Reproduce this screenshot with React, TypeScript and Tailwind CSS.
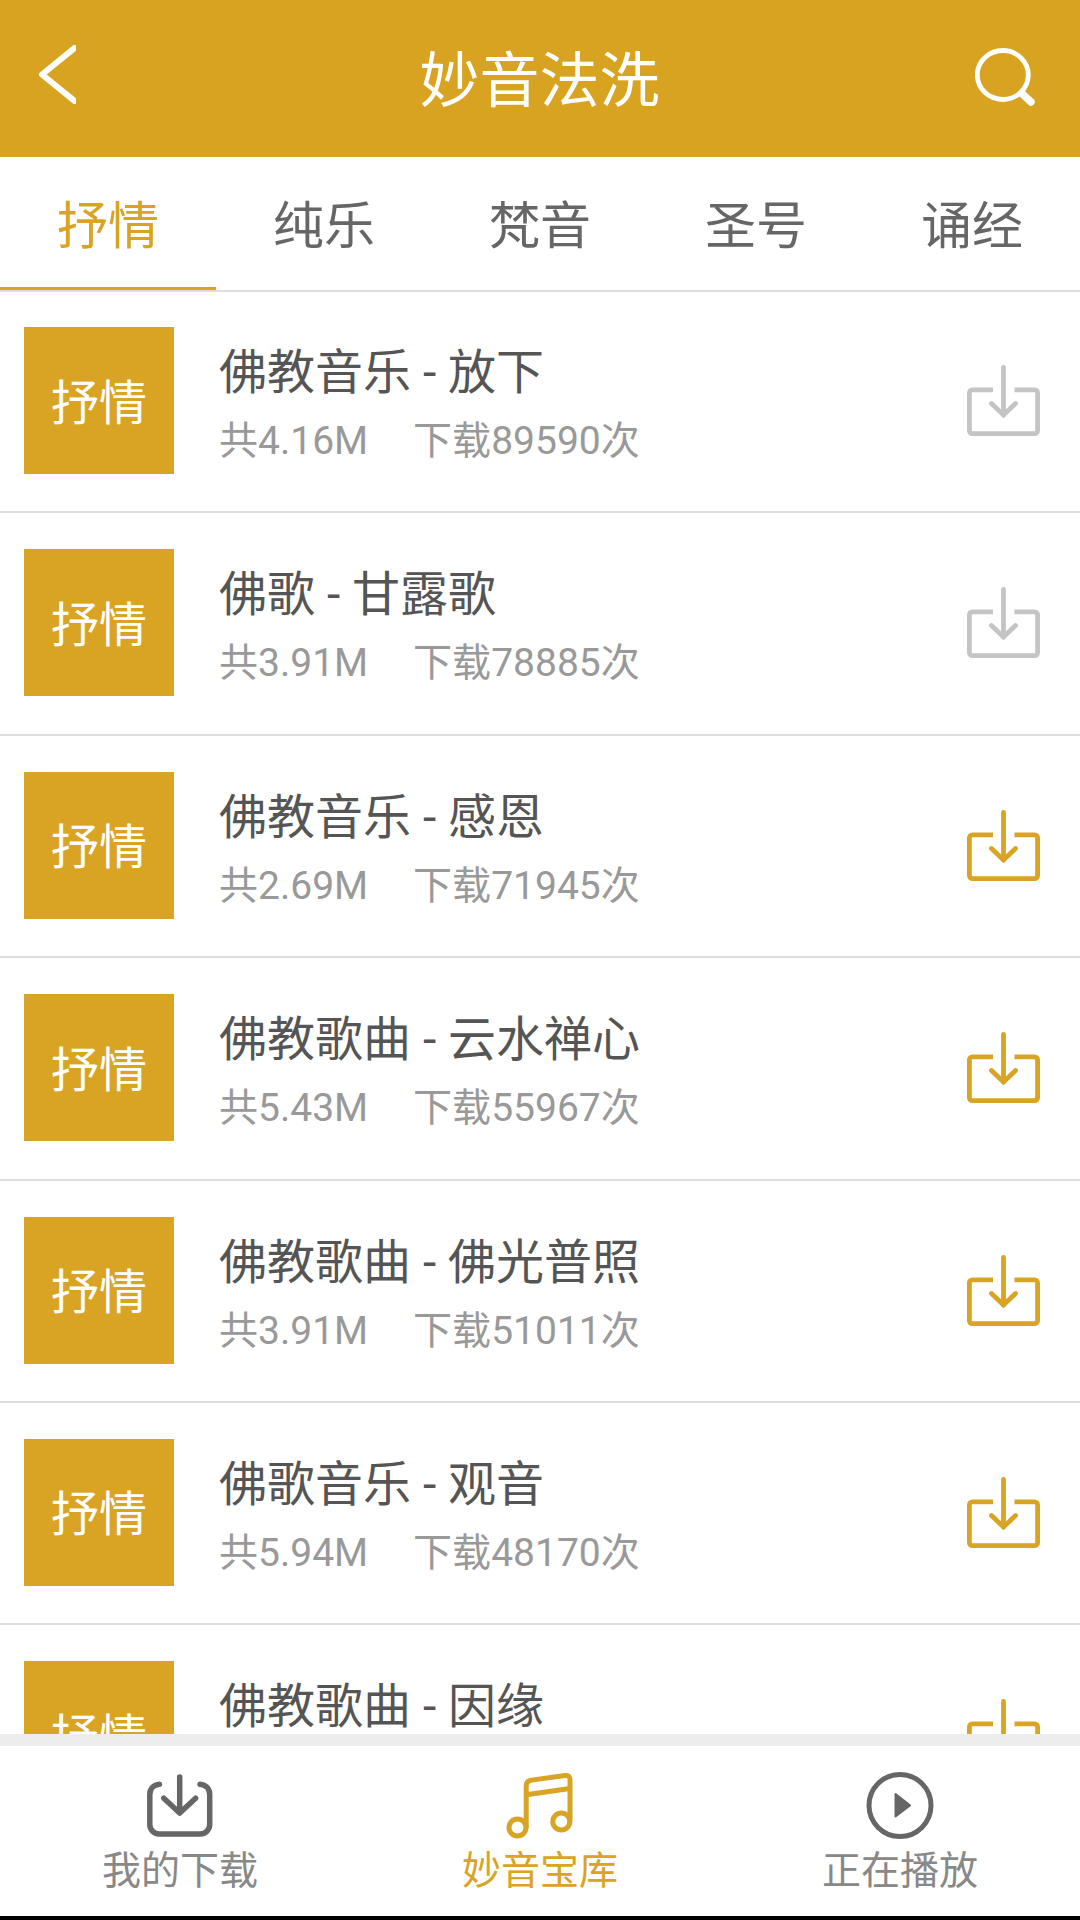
import { useState } from 'react';
import { clsx } from 'clsx';

interface Song {
  id: number;
  title: string;
  size?: string;
  downloads?: number;
  /** Already saved on the device, so the icon is greyed out */
  downloaded: boolean;
}

const TABS = ['抒情', '纯乐', '梵音', '圣号', '诵经'];

const SONGS: Song[] = [
  { id: 1, title: '佛教音乐 - 放下', size: '4.16M', downloads: 89590, downloaded: true },
  { id: 2, title: '佛歌 - 甘露歌', size: '3.91M', downloads: 78885, downloaded: true },
  { id: 3, title: '佛教音乐 - 感恩', size: '2.69M', downloads: 71945, downloaded: false },
  { id: 4, title: '佛教歌曲 - 云水禅心', size: '5.43M', downloads: 55967, downloaded: false },
  { id: 5, title: '佛教歌曲 - 佛光普照', size: '3.91M', downloads: 51011, downloaded: false },
  { id: 6, title: '佛歌音乐 - 观音', size: '5.94M', downloads: 48170, downloaded: false },
  { id: 7, title: '佛教歌曲 - 因缘', downloaded: false },
];

function BackIcon() {
  return (
    <svg width="38" height="59" viewBox="0 0 38 59" fill="none" stroke="currentColor" strokeWidth="6">
      <path d="M36.500 3 4 29.500 36.500 56" strokeLinecap="round" strokeLinejoin="round" />
    </svg>
  );
}

function SearchIcon() {
  return (
    <svg width="60" height="58" viewBox="0 0 60 58" fill="none" stroke="currentColor">
      <ellipse cx="27.8" cy="27" rx="25.5" ry="24.5" strokeWidth="4.8" />
      <path d="M47 45.5 56 54" strokeWidth="7.5" strokeLinecap="round" />
    </svg>
  );
}

function DownloadIcon({ className }: { className?: string }) {
  return (
    <svg
      width="73"
      height="72"
      viewBox="0 0 73 72"
      fill="none"
      stroke="currentColor"
      strokeWidth="4.8"
      className={className}
    >
      <path d="M26 24.8H5.4a3 3 0 0 0-3 3V65.600a3 3 0 0 0 3 3H67.600a3 3 0 0 0 3-3V27.800a3 3 0 0 0-3-3H47.500" />
      <path d="M36.500 2.500V50" strokeLinecap="round" />
      <path d="M24.500 38.500 36.500 50 48.500 38.500" strokeLinecap="round" />
    </svg>
  );
}

function MyDownloadsIcon() {
  return (
    <svg
      width="68"
      height="68"
      viewBox="0 0 68 68"
      fill="none"
      stroke="currentColor"
      strokeWidth="5.5"
      strokeLinecap="round"
      strokeLinejoin="round"
    >
      <path d="M13.500 12.300C7.500 12.800 3.800 16.800 3.800 22.500V52.500a9.500 9.500 0 0 0 9.500 9.500H54.200a9.500 9.500 0 0 0 9.500-9.500V22.500C63.700 16.800 60 12.800 54 12.300" />
      <path d="M33.700 5V40" />
      <path d="M17.800 26.200 33.700 41 49.600 26.200" />
    </svg>
  );
}

function MusicIcon() {
  return (
    <svg
      width="68"
      height="68"
      viewBox="0 0 68 68"
      fill="none"
      stroke="currentColor"
      strokeWidth="5"
      strokeLinejoin="round"
    >
      <circle cx="11.500" cy="55.500" r="8.500" />
      <circle cx="55.300" cy="49.500" r="8.500" />
      <path d="M20.200 56V14C20.200 10.500 22.200 8.600 25.700 8.100L59 3.500C62 3.200 64 4.500 64 7.500V49.500" />
      <path d="M20.200 22.800 64 16.500" />
    </svg>
  );
}

function PlayIcon() {
  return (
    <svg width="68" height="68" viewBox="0 0 68 68" fill="none" stroke="currentColor">
      <circle cx="34" cy="33.500" r="31" strokeWidth="5" />
      <path
        d="M29.500 22V44.500L44 33.400Z"
        fill="currentColor"
        strokeWidth="2"
        strokeLinejoin="round"
      />
    </svg>
  );
}

const NAV_ITEMS = [
  { label: '我的下载', Icon: MyDownloadsIcon },
  { label: '妙音宝库', Icon: MusicIcon },
  { label: '正在播放', Icon: PlayIcon },
];

function SongRow({ song, category }: { song: Song; category: string }) {
  return (
    <li className="flex h-[222.4px] shrink-0 items-start border-b-2 border-[#dddddd] pl-6 pr-10">
      <div className="mt-9 flex h-[147px] w-[150px] shrink-0 items-center justify-center bg-[#d9a324] text-[48px] leading-none text-white">
        <span className="mt-1.5">{category}</span>
      </div>
      <div className="ml-[45px] mt-[47px] min-w-0 flex-1">
        <h2 className="text-[48px] leading-[70px] text-[#555555]">{song.title}</h2>
        {song.size && (
          <p className="-mt-px flex gap-[45px] text-[39px] leading-[68px] text-[#999999]">
            <span>共{song.size}</span>
            <span>下载{song.downloads}次</span>
          </p>
        )}
      </div>
      <button type="button" aria-label="下载" className="mt-[74px]">
        <DownloadIcon className={song.downloaded ? 'text-[#c4c4c4]' : 'text-[#d9a324]'} />
      </button>
    </li>
  );
}

export default function App() {
  const [activeTab, setActiveTab] = useState(0);
  const [activeNav, setActiveNav] = useState(1);

  return (
    <div className="flex h-[1920px] w-[1080px] flex-col overflow-hidden bg-white font-[Roboto,'Noto_Sans_CJK_SC',sans-serif]">
      <header className="flex h-[157px] shrink-0 items-start justify-between bg-[#d8a321] text-white">
        <button type="button" aria-label="返回" className="ml-[38px] mt-[45px] w-[66px]">
          <BackIcon />
        </button>
        <h1 className="mt-[40px] text-[60px] leading-[84px]">妙音法洗</h1>
        <button type="button" aria-label="搜索" className="mr-[44px] mt-[48px] w-[61px]">
          <SearchIcon />
        </button>
      </header>

      <nav className="flex h-[135px] shrink-0 border-b-2 border-[#dddddd]">
        {TABS.map((tab, index) => (
          <button
            key={tab}
            type="button"
            onClick={() => setActiveTab(index)}
            className={clsx(
              'flex-1 border-b-3 pt-[9px] text-[51px] leading-none',
              activeTab === index
                ? 'border-[#d9a324] text-[#d9a324]'
                : 'border-transparent text-[#666666]',
            )}
          >
            {tab}
          </button>
        ))}
      </nav>

      <ul className="-mt-px flex min-h-0 flex-1 flex-col overflow-hidden">
        {SONGS.map((song) => (
          <SongRow key={song.id} song={song} category={TABS[0]} />
        ))}
      </ul>

      <footer className="flex h-[186px] shrink-0 border-b-4 border-t-12 border-b-black border-t-[#ededed]">
        {NAV_ITEMS.map(({ label, Icon }, index) => (
          <button
            key={label}
            type="button"
            onClick={() => setActiveNav(index)}
            className={clsx(
              'flex flex-1 flex-col items-center pt-[26px]',
              activeNav === index ? 'text-[#d9a324]' : 'text-[#666666]',
            )}
          >
            <Icon />
            <span
              className={clsx(
                'mt-[3px] text-[39px] leading-[56px]',
                activeNav !== index && 'text-[#888888]',
              )}
            >
              {label}
            </span>
          </button>
        ))}
      </footer>
    </div>
  );
}
